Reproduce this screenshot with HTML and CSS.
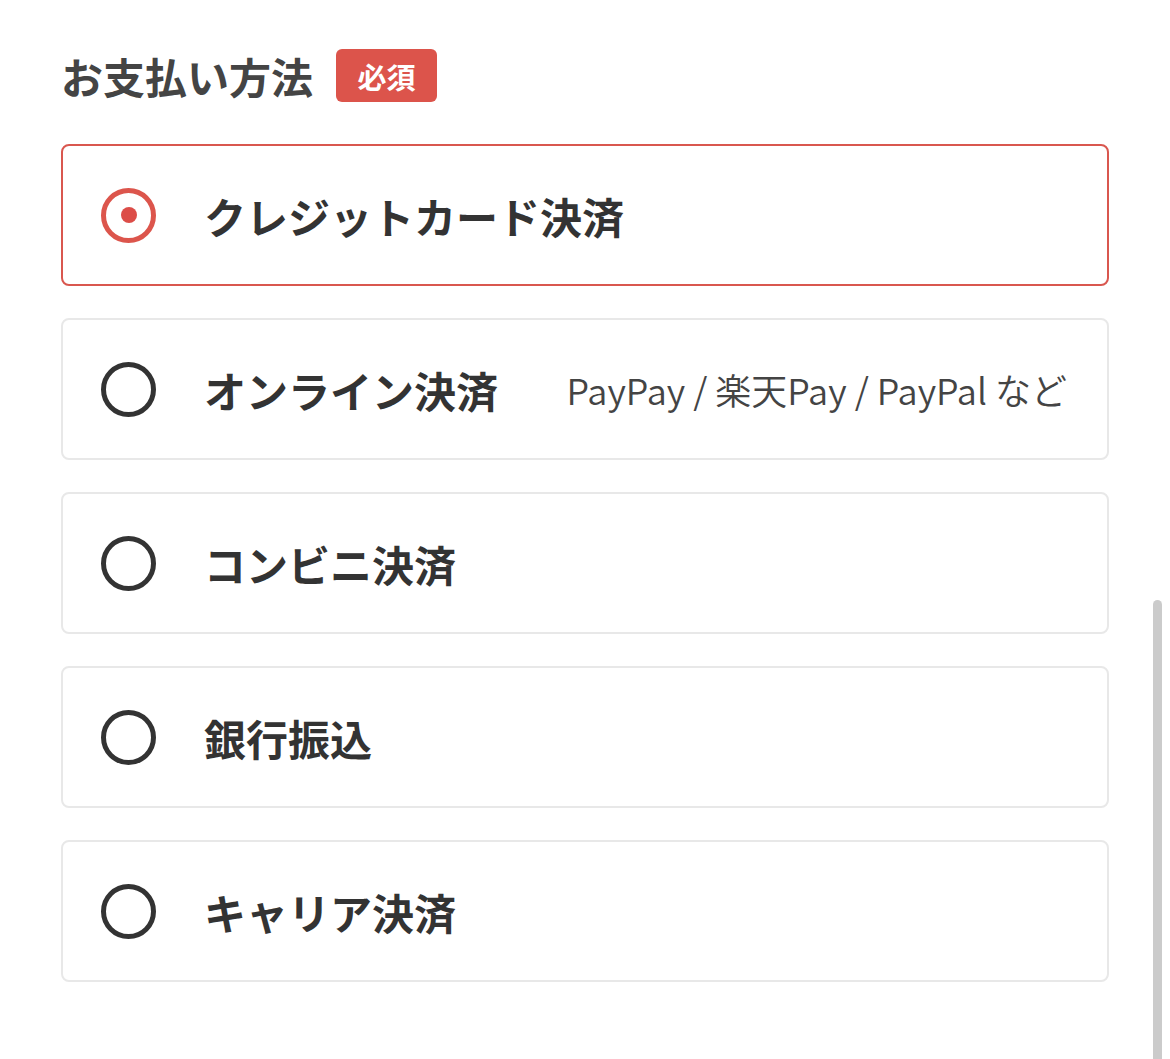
FILE: index.html
```html
<!DOCTYPE html>
<html lang="ja">
  <head>
    <meta charset="UTF-8" />
    <meta name="viewport" content="width=device-width, initial-scale=1.0" />
    <title>お支払い方法</title>
    <link rel="stylesheet" href="styles.css" />
  </head>
  <body>
    <main class="payment">
      <div class="payment-title">
        <h2>お支払い方法</h2>
        <span class="badge">必須</span>
      </div>

      <div class="options">
        <label class="option selected">
          <span class="radio"></span>
          <span class="option-label">クレジットカード決済</span>
        </label>
        <label class="option">
          <span class="radio"></span>
          <span class="option-label">オンライン決済</span>
          <span class="option-note">PayPay / 楽天Pay / PayPal など</span>
        </label>
        <label class="option">
          <span class="radio"></span>
          <span class="option-label">コンビニ決済</span>
        </label>
        <label class="option">
          <span class="radio"></span>
          <span class="option-label">銀行振込</span>
        </label>
        <label class="option">
          <span class="radio"></span>
          <span class="option-label">キャリア決済</span>
        </label>
      </div>
    </main>
    <div class="scrollbar"></div>
  </body>
</html>
```

FILE: styles.css
```css
/* Reset */
* {
  margin: 0;
  padding: 0;
  box-sizing: border-box;
}

body {
  font-family: "Noto Sans CJK JP", "Noto Sans", sans-serif;
  color: #333;
  background-color: #fff;
  min-height: 100vh;
}

/* Layout */
.payment {
  width: 1048px;
  margin-left: 61px;
  padding-top: 49px;
}

/* Title */
.payment-title {
  display: flex;
  align-items: center;
  gap: 23px;
  height: 53px;
  margin-bottom: 42px;
}

.payment-title h2 {
  font-size: 42px;
  font-weight: 700;
  color: #444;
  line-height: 1;
}

.badge {
  display: flex;
  align-items: center;
  justify-content: center;
  width: 101px;
  height: 53px;
  background-color: #dc544b;
  color: #fff;
  border-radius: 6px;
  font-size: 29px;
  font-weight: 700;
}

/* Options */
.options {
  display: flex;
  flex-direction: column;
  gap: 32px;
}

.option {
  display: flex;
  align-items: center;
  height: 142px;
  padding: 0 40px 0 38px;
  border: 2px solid #e8e8e8;
  border-radius: 8px;
  background-color: #fff;
  cursor: pointer;
}

.option.selected {
  border-color: #d9574f;
}

.radio {
  position: relative;
  flex: none;
  width: 55px;
  height: 55px;
  border: 5px solid #333;
  border-radius: 50%;
  margin-right: 48px;
}

.option.selected .radio {
  border-color: #dc554c;
}

.option.selected .radio::after {
  content: "";
  position: absolute;
  top: 50%;
  left: 50%;
  width: 16px;
  height: 16px;
  margin: -8px 0 0 -8px;
  border-radius: 50%;
  background-color: #dc4d48;
}

.option-label {
  font-size: 42px;
  font-weight: 700;
  color: #333;
}

.option-note {
  margin-left: auto;
  font-size: 36px;
  font-weight: 350;
  color: #444;
}

/* Overlay scrollbar */
.scrollbar {
  position: fixed;
  top: 600px;
  right: 8px;
  width: 9px;
  height: 470px;
  border-radius: 5px;
  background-color: #cbcbcb;
}
```
